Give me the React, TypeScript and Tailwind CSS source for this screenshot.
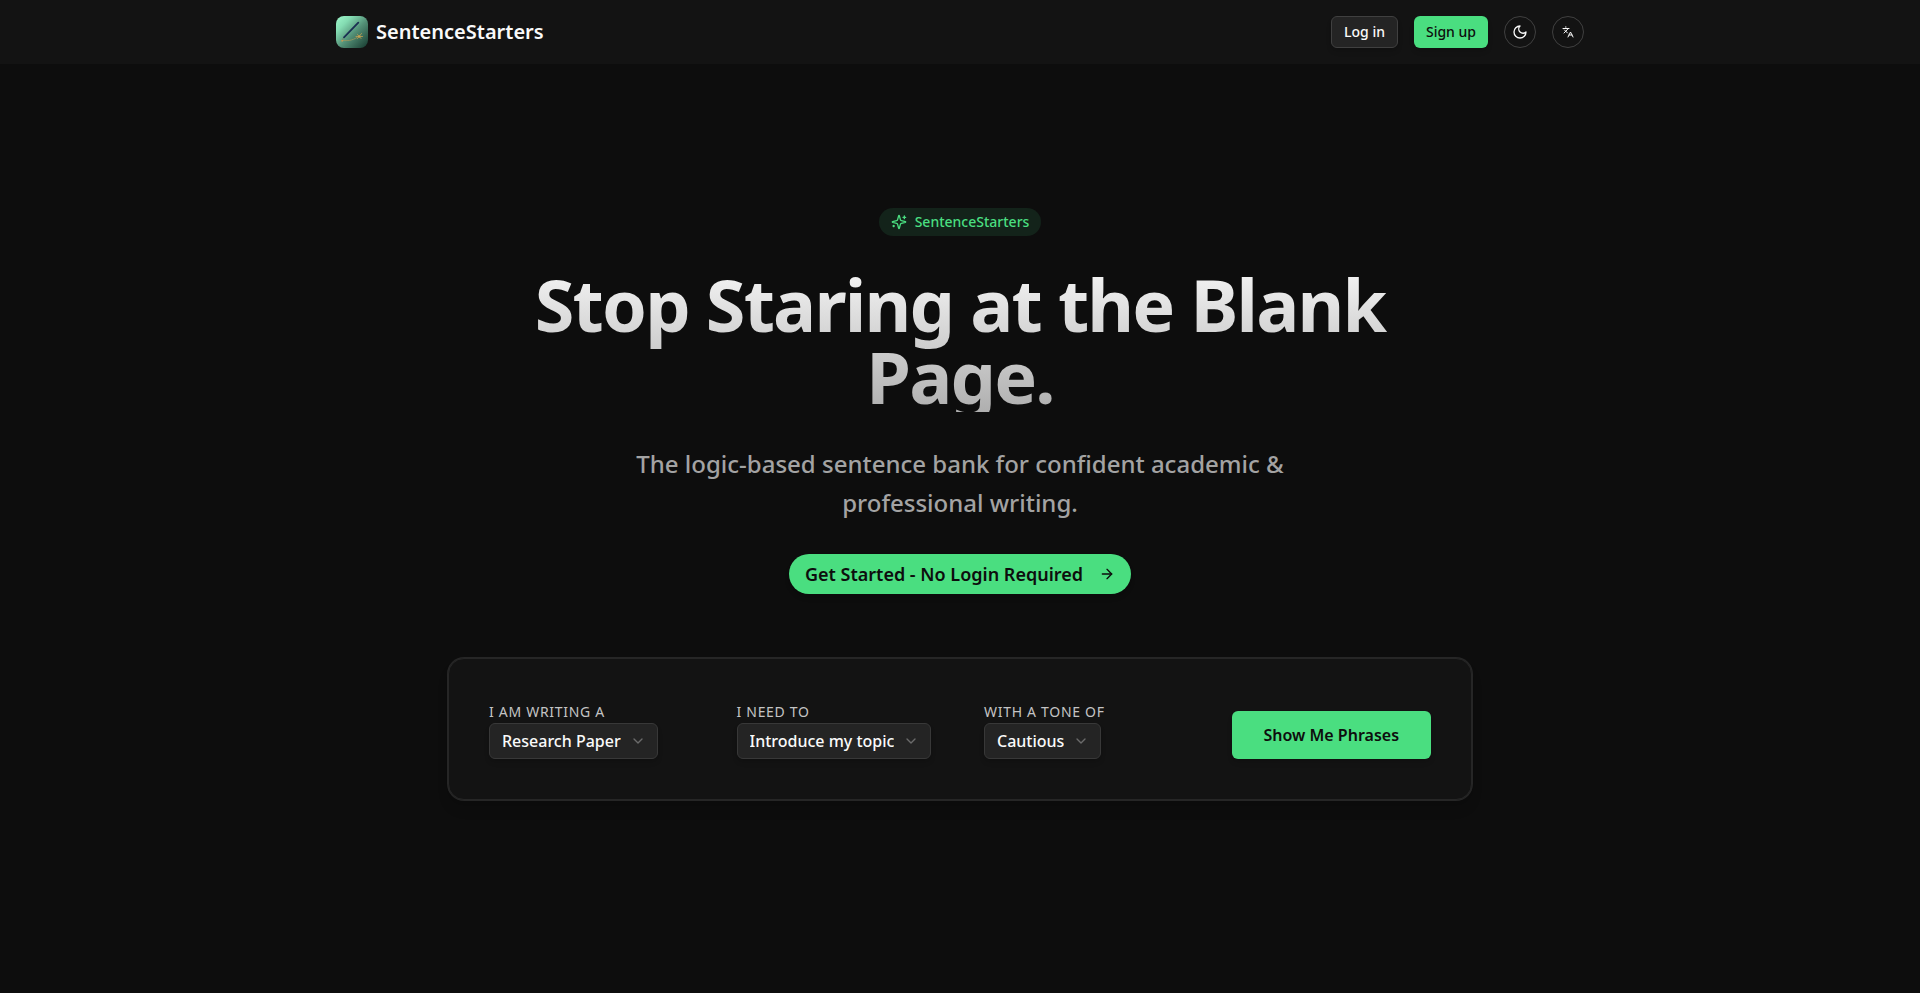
import { ArrowRight, ChevronDown, Languages } from "lucide-react";

interface ISelectField {
  id: string;
  label: string;
  options: string[];
}

const FIELDS: ISelectField[] = [
  {
    id: "document",
    label: "I am writing a",
    options: ["Research Paper"],
  },
  {
    id: "purpose",
    label: "I need to",
    options: ["Introduce my topic"],
  },
  {
    id: "tone",
    label: "With a tone of",
    options: ["Cautious"],
  },
];

const Logo = () => (
  <svg viewBox="0 0 32 32" className="size-8 rounded-lg" aria-hidden="true">
    <defs>
      <linearGradient id="logo-bg" x1="0" y1="0" x2="1" y2="1">
        <stop offset="0" stopColor="#a0f8cc" />
        <stop offset="0.25" stopColor="#84dcb2" />
        <stop offset="0.55" stopColor="#538f76" />
        <stop offset="1" stopColor="#15382e" />
      </linearGradient>
    </defs>
    <rect width="32" height="32" fill="url(#logo-bg)" />
    <path
      d="M6.300 24.300c5 .8 10 .2 15-3"
      fill="none"
      stroke="#a89a5c"
      strokeWidth="0.7"
    />
    <path
      d="M22.300 6.700 8 21.300"
      stroke="#1b2f52"
      strokeWidth="1.800"
      strokeLinecap="round"
    />
    <path d="M7.500 22 6 24.500" stroke="#6f8068" strokeWidth="0.8" />
    <circle cx="6.200" cy="24.700" r="1" fill="#c09a55" />
    <path
      d="M20 20.500h6.500M21.500 18.500l3.500 4M25.500 17.500l-4 5"
      stroke="#c5a052"
      strokeWidth="0.8"
      strokeLinecap="round"
    />
    <circle cx="23.200" cy="20.500" r="1.200" fill="#c5a052" />
  </svg>
);

const Sparkles = () => (
  <svg
    viewBox="0 0 24 24"
    className="size-4"
    fill="none"
    stroke="currentColor"
    strokeWidth="2"
    strokeLinecap="round"
    strokeLinejoin="round"
    aria-hidden="true"
  >
    <path d="M9.937 15.5A2 2 0 0 0 8.5 14.063l-6.135-1.582a.5.5 0 0 1 0-.962L8.5 9.936A2 2 0 0 0 9.937 8.5l1.582-6.135a.5.5 0 0 1 .963 0L14.063 8.5A2 2 0 0 0 15.5 9.937l6.135 1.581a.5.5 0 0 1 0 .964L15.5 14.063a2 2 0 0 0-1.437 1.437l-1.582 6.135a.5.5 0 0 1-.963 0z" />
    <path d="M20 3v4M22 5h-4M4 17v2M5 18H3" />
  </svg>
);

const Moon = () => (
  <svg
    viewBox="0 0 24 24"
    className="size-4"
    fill="none"
    stroke="currentColor"
    strokeWidth="2"
    strokeLinecap="round"
    strokeLinejoin="round"
    aria-hidden="true"
  >
    <path d="M12 3a6 6 0 0 0 9 9 9 9 0 1 1-9-9Z" />
  </svg>
);

const Header = () => (
  <header className="bg-[#131313]">
    <div className="mx-auto flex h-16 max-w-7xl items-center justify-between px-4">
      <a href="#" className="flex items-center gap-2">
        <Logo />
        <span className="text-xl font-semibold">SentenceStarters</span>
      </a>

      <div className="flex items-center gap-4 text-sm font-medium">
        <button
          type="button"
          className="h-8 rounded-md border border-[#404040] bg-[#242424] px-3 shadow-md"
        >
          Log in
        </button>
        <button
          type="button"
          className="h-8 rounded-md bg-[#4ade80] px-3 text-[#0d0d0d] shadow-md"
        >
          Sign up
        </button>
        <button
          type="button"
          aria-label="Toggle theme"
          className="flex size-8 items-center justify-center rounded-full border border-[#404040]"
        >
          <Moon />
        </button>
        <button
          type="button"
          aria-label="Change language"
          className="flex size-8 items-center justify-center rounded-full border border-[#404040]"
        >
          <Languages className="size-3" />
        </button>
      </div>
    </div>
  </header>
);

const SelectField = ({ id, label, options }: ISelectField) => (
  <div>
    <label htmlFor={id} className="text-sm tracking-wider uppercase text-[#c4c4c4]">
      {label}
    </label>
    <div className="relative w-fit">
      <select
        id={id}
        className="block h-9 appearance-none rounded-md border border-[#383838] bg-[#242424] pr-9 pl-3 font-medium shadow-md [field-sizing:content]"
      >
        {options.map((option) => (
          <option key={option}>{option}</option>
        ))}
      </select>
      <ChevronDown className="pointer-events-none absolute top-1/2 right-3 size-4 -translate-y-1/2 text-[#6b6b6b]" />
    </div>
  </div>
);

const Hero = () => (
  <section className="flex flex-col items-center px-4 py-36 text-center">
    <div className="flex h-7 items-center gap-2 rounded-full bg-[#13231a] px-3 text-sm font-medium text-[#4ade80]">
      <Sparkles />
      SentenceStarters
    </div>

    <h1 className="mt-8 max-w-4xl bg-linear-to-b from-[#f5f5f5] to-[#afafaf] bg-clip-text text-7xl leading-none font-bold tracking-tight text-transparent">
      Stop Staring at the Blank Page.
    </h1>

    <p className="mt-8 max-w-2xl text-2xl leading-relaxed font-medium text-[#a3a3a3]">
      The logic-based sentence bank for confident academic &amp; professional
      writing.
    </p>

    <a
      href="#phrases"
      className="mt-8 flex h-10 items-center gap-4 rounded-full bg-[#4ade80] px-4 text-lg font-semibold text-[#0d0d0d] shadow-md"
    >
      Get Started - No Login Required
      <ArrowRight className="size-4" />
    </a>

    <form
      id="phrases"
      className="mt-16 grid w-full max-w-5xl grid-cols-1 items-end gap-12 rounded-2xl border border-[#262626] bg-[#131313] p-10 text-left shadow-lg ring-1 ring-[#262626] md:grid-cols-4"
    >
      {FIELDS.map((field) => (
        <SelectField key={field.id} {...field} />
      ))}
      <button
        type="button"
        className="h-12 rounded-md bg-[#4ade80] font-semibold text-[#0d0d0d] shadow-md"
      >
        Show Me Phrases
      </button>
    </form>
  </section>
);

const App = () => {
  return (
    <div className="min-h-screen bg-[#0d0d0d] font-['Noto_Sans',sans-serif] text-[#fafafa]">
      <Header />
      <main>
        <Hero />
      </main>
    </div>
  );
};

export default App;
